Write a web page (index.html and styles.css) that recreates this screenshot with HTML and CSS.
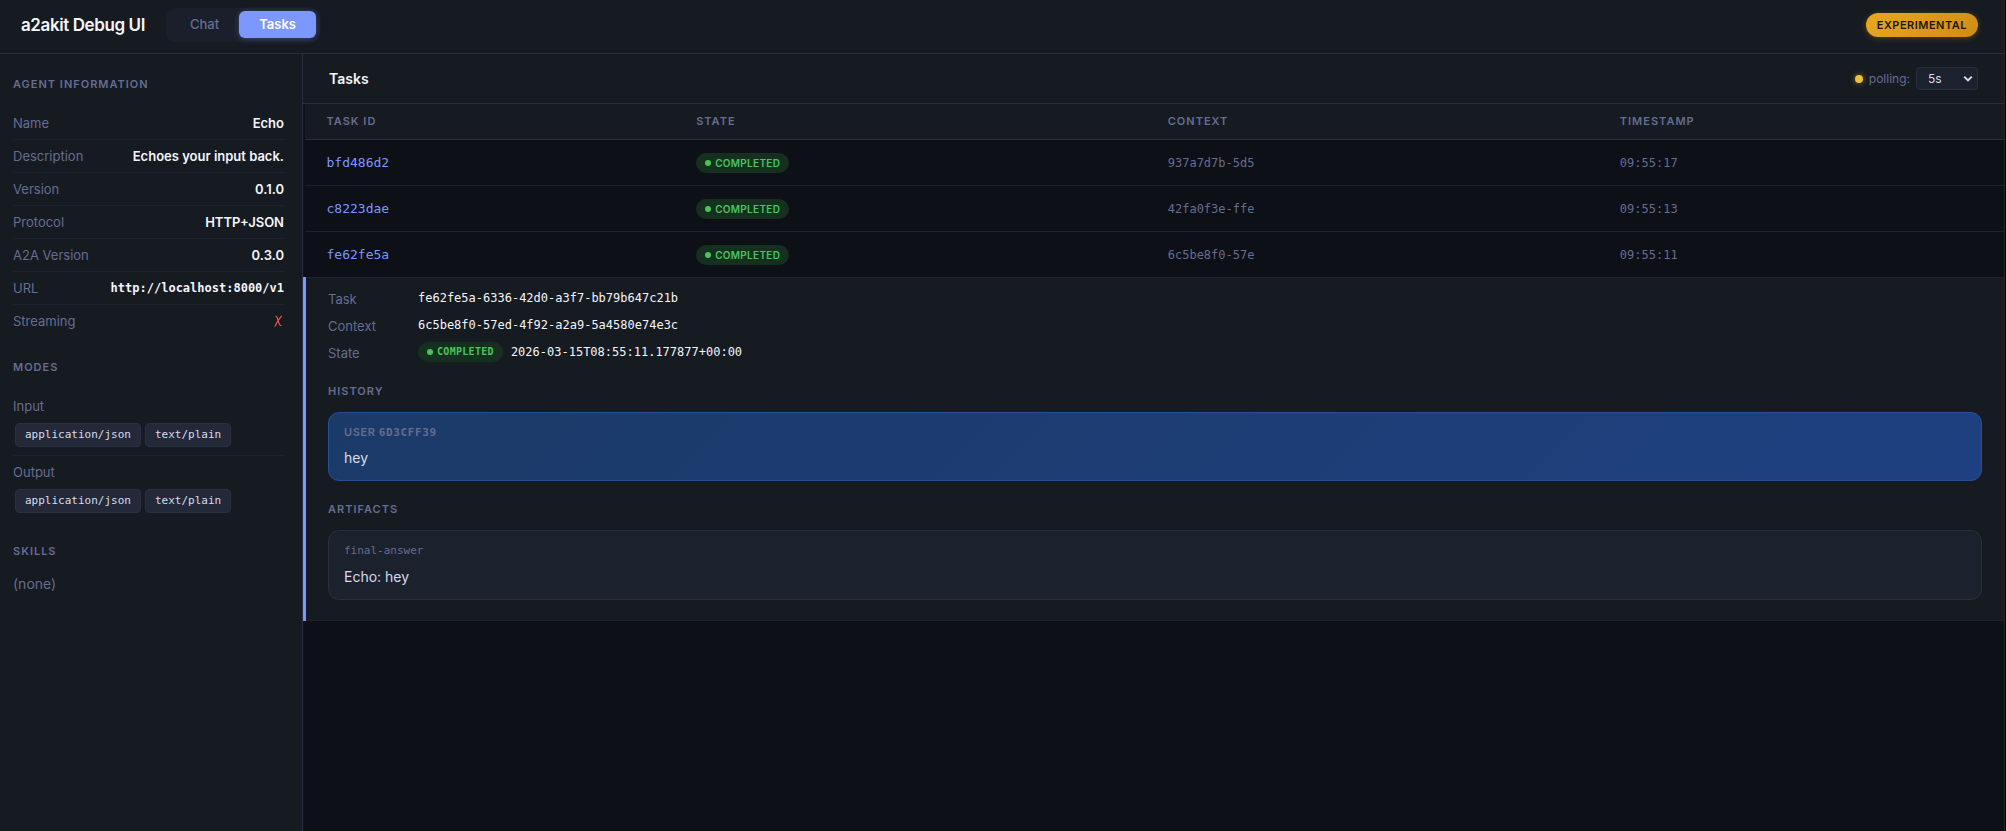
FILE: index.html
```html
<!DOCTYPE html>
<html lang="en">
<head>
<meta charset="utf-8">
<title>a2akit Debug UI</title>
<link rel="stylesheet" href="styles.css">
</head>
<body>
<div class="app">
  <header class="topbar">
    <h1 class="brand">a2akit Debug UI</h1>
    <nav class="tabs">
      <button class="tab" type="button">Chat</button>
      <button class="tab tab-active" type="button">Tasks</button>
    </nav>
    <span class="experimental">EXPERIMENTAL</span>
  </header>
  <div class="body">
    <aside class="sidebar">
      <section class="panel">
        <h2 class="label">AGENT INFORMATION</h2>
        <dl class="info">
          <div class="info-row"><dt>Name</dt><dd>Echo</dd></div>
          <div class="info-row"><dt>Description</dt><dd>Echoes your input back.</dd></div>
          <div class="info-row"><dt>Version</dt><dd>0.1.0</dd></div>
          <div class="info-row"><dt>Protocol</dt><dd>HTTP+JSON</dd></div>
          <div class="info-row"><dt>A2A Version</dt><dd>0.3.0</dd></div>
          <div class="info-row"><dt>URL</dt><dd class="mono">http://localhost:8000/v1</dd></div>
          <div class="info-row"><dt>Streaming</dt><dd class="no"><svg class="cross" viewBox="0 0 9 12" role="img" aria-label="No"><path d="M7.6.8C5 4 2.600 7.500.8 11.400M1.600 1.300C3.200 1.100 3.500 3 4.200 5.800 4.900 8.600 5.500 11 7.500 10.700"/></svg></dd></div>
        </dl>
      </section>
      <section class="panel">
        <h2 class="label">MODES</h2>
        <div class="mode">
          <span class="mode-name">Input</span>
          <div class="chips"><span class="chip">application/json</span><span class="chip">text/plain</span></div>
        </div>
        <div class="mode">
          <span class="mode-name">Output</span>
          <div class="chips"><span class="chip">application/json</span><span class="chip">text/plain</span></div>
        </div>
      </section>
      <section class="panel">
        <h2 class="label">SKILLS</h2>
        <p class="none">(none)</p>
      </section>
    </aside>
    <main class="main">
      <div class="main-head">
        <h2 class="main-title">Tasks</h2>
        <div class="polling">
          <span class="poll-dot"></span>
          <label for="poll">polling:</label>
          <span class="select-wrap">
            <select id="poll" class="poll-select"><option>5s</option></select>
            <svg class="chevron" viewBox="0 0 10 8" aria-hidden="true"><path d="M1.2 1.6 5 5.4 8.8 1.6"/></svg>
          </span>
        </div>
      </div>
      <table class="tasks">
        <colgroup><col class="c-id"><col class="c-state"><col class="c-context"><col class="c-time"></colgroup>
        <thead>
          <tr><th>TASK ID</th><th>STATE</th><th>CONTEXT</th><th>TIMESTAMP</th></tr>
        </thead>
        <tbody>
          <tr><td class="task-id">bfd486d2</td><td><span class="badge">COMPLETED</span></td><td class="meta">937a7d7b-5d5</td><td class="meta">09:55:17</td></tr>
          <tr><td class="task-id">c8223dae</td><td><span class="badge">COMPLETED</span></td><td class="meta">42fa0f3e-ffe</td><td class="meta">09:55:13</td></tr>
          <tr><td class="task-id">fe62fe5a</td><td><span class="badge">COMPLETED</span></td><td class="meta">6c5be8f0-57e</td><td class="meta">09:55:11</td></tr>
          <tr>
            <td class="detail" colspan="4">
              <dl class="facts">
                <dt>Task</dt><dd>fe62fe5a-6336-42d0-a3f7-bb79b647c21b</dd>
                <dt>Context</dt><dd>6c5be8f0-57ed-4f92-a2a9-5a4580e74e3c</dd>
                <dt>State</dt><dd><span class="badge badge-mono">COMPLETED</span><span>2026-03-15T08:55:11.177877+00:00</span></dd>
              </dl>
              <h3 class="label">HISTORY</h3>
              <article class="card card-user">
                <div class="card-head">USER <span class="card-id">6D3CFF39</span></div>
                <div class="card-text">hey</div>
              </article>
              <h3 class="label">ARTIFACTS</h3>
              <article class="card">
                <div class="card-name">final-answer</div>
                <div class="card-text">Echo: hey</div>
              </article>
            </td>
          </tr>
        </tbody>
      </table>
    </main>
  </div>
</div>
</body>
</html>
```
FILE: styles.css
```css
:root {
  --bg: #0d1017;
  --surface: #161a21;
  --raised: #1c212e;
  --chip: #232939;
  --line: #2a2e3e;
  --line-soft: #1e222d;
  --muted: #656d92;
  --text: #d8dcec;
  --strong: #f4f5fa;
  --accent: #7c97ff;
  --green: #4ac55c;
  --mono: "DejaVu Sans Mono", "Liberation Mono", monospace;
}

* { box-sizing: border-box; }

body {
  margin: 0;
  background: #000;
  color: var(--text);
  font: 14px/20px Inter, "Liberation Sans", sans-serif;
}

h1, h2, h3, dl, dd, p { margin: 0; }

.app {
  display: flex;
  flex-direction: column;
  min-height: 100vh;
  margin-right: 1px;
  border-right: 1px solid #23262e;
  background: var(--bg);
}

.topbar {
  display: flex;
  align-items: center;
  height: 54px;
  padding: 0 26px 4px 21px;
  background: var(--surface);
  border-bottom: 1px solid var(--line);
}

.brand {
  color: var(--strong);
  font-size: 17px;
  font-weight: 600;
  letter-spacing: -0.4px;
}

.tabs {
  display: flex;
  margin-left: 21px;
  padding: 3px 4px 4px;
  border-radius: 9px;
  background: #1a1f2b;
}

.tab {
  height: 27px;
  padding: 0 20px;
  border: 0;
  border-radius: 6px;
  background: none;
  color: var(--muted);
  font: 500 13px/20px Inter, sans-serif;
}

.tab-active {
  background: var(--accent);
  box-shadow: 0 1px 6px rgba(124, 151, 255, 0.35);
  color: #fff;
  font-weight: 600;
}

.experimental {
  margin-left: auto;
  padding: 2px 11px;
  border-radius: 12px;
  background: linear-gradient(135deg, #e9a820, #cf8c17);
  box-shadow: 0 1px 6px rgba(230, 160, 30, 0.3);
  color: #1c1608;
  font-size: 11px;
  font-weight: 600;
  letter-spacing: 0.5px;
}

.body { display: flex; flex: 1; }

.sidebar {
  flex: none;
  width: 303px;
  padding: 20px 18px 20px 13px;
  background: var(--surface);
  border-right: 1px solid var(--line);
}

.panel { margin-bottom: 20px; }

.label {
  color: var(--muted);
  font-size: 11px;
  font-weight: 600;
  letter-spacing: 1px;
  line-height: 20px;
}

.panel .label { margin-bottom: 13px; }

.info-row {
  display: flex;
  justify-content: space-between;
  padding: 6px 0;
  border-bottom: 1px solid var(--line-soft);
}

.info-row:last-child, .mode:last-child { border-bottom: 0; }

.info dt { color: var(--muted); font-size: 13px; }
.info dd { color: var(--strong); font-size: 13px; font-weight: 600; }
.info .mono { font: 700 12px/20px var(--mono); }

.cross {
  display: block;
  width: 9px;
  height: 12px;
  margin: 4px 1px 0;
  fill: none;
  stroke: #e5534b;
  stroke-width: 1.3;
}

.mode {
  padding: 6px 0 8px;
  border-bottom: 1px solid var(--line-soft);
}

.mode-name { display: block; color: var(--muted); font-size: 13px; }

.chips { display: flex; gap: 4px; margin: 7px 2px 0; }

.chip {
  padding: 1px 9px;
  border: 1px solid #2a3042;
  border-radius: 4px;
  background: var(--chip);
  font: 11px/20px var(--mono);
}

.none { color: var(--muted); }

.main { flex: 1; min-width: 0; }

.main-head {
  display: flex;
  align-items: center;
  justify-content: space-between;
  height: 50px;
  padding: 0 26px;
  background: var(--surface);
  border-bottom: 1px solid var(--line);
}

.main-title { color: var(--strong); font-size: 14px; font-weight: 600; }

.polling {
  display: flex;
  align-items: center;
  gap: 6px;
  color: var(--muted);
  font-size: 12px;
}

.poll-dot {
  width: 8px;
  height: 8px;
  border-radius: 50%;
  background: #efbf3e;
  box-shadow: 0 0 6px rgba(239, 191, 62, 0.5);
}

.select-wrap { position: relative; display: flex; }

.poll-select {
  appearance: none;
  width: 62px;
  height: 23px;
  padding: 0 11px;
  border: 1px solid var(--line);
  border-radius: 4px;
  background: var(--raised);
  color: var(--text);
  font: 12px Inter, sans-serif;
}

.chevron {
  position: absolute;
  top: 8px;
  right: 5px;
  width: 10px;
  height: 8px;
  fill: none;
  stroke: var(--text);
  stroke-width: 2;
  pointer-events: none;
}

.tasks {
  width: 100%;
  table-layout: fixed;
  border-collapse: collapse;
}

.c-id { width: 21.75%; }
.c-state { width: 27.75%; }
.c-context { width: 26.6%; }
.c-time { width: 23.9%; }

.tasks th {
  height: 35px;
  padding: 0 22px;
  background: var(--surface);
  border-bottom: 1px solid var(--line);
  color: var(--muted);
  font-size: 11px;
  font-weight: 600;
  letter-spacing: 1px;
  text-align: left;
}

.tasks td {
  height: 46px;
  padding: 1px 22px 0;
  border-bottom: 1px solid var(--line-soft);
}

.tasks .task-id { color: var(--accent); font: 13px/20px var(--mono); }
.tasks .meta { color: var(--muted); font: 12px/20px var(--mono); }

.badge {
  display: inline-flex;
  align-items: center;
  gap: 4px;
  padding: 0 9px;
  border-radius: 10px;
  background: #15301f;
  color: var(--green);
  font-size: 10px;
  font-weight: 600;
  letter-spacing: 0.3px;
  line-height: 20px;
  vertical-align: middle;
}

.badge::before {
  content: "";
  width: 6px;
  height: 6px;
  border-radius: 50%;
  background: currentColor;
}

.badge-mono { font-weight: 700; }

.tasks .detail {
  padding: 10px 22px 20px;
  background: var(--surface);
  border-left: 3px solid var(--accent);
}

.facts {
  display: grid;
  grid-template-columns: 90px 1fr;
  row-gap: 5px;
  margin-bottom: 17px;
}

.facts dt { padding-top: 1px; color: var(--muted); font-size: 13px; line-height: 21px; }

.facts dd {
  display: flex;
  align-items: flex-start;
  gap: 8px;
  color: var(--strong);
  font: 12px/20px var(--mono);
}

.detail .label { margin-bottom: 11px; }

.card {
  padding: 10px 15px;
  border: 1px solid var(--line);
  border-radius: 11px;
  background: var(--raised);
}

.card + .label { margin-top: 18px; }

.card-user {
  border-color: #284e94;
  background: linear-gradient(135deg, #1b3a68, #1e4080);
}

.card-head {
  color: var(--muted);
  font-size: 11px;
  font-weight: 600;
  letter-spacing: 0.6px;
  line-height: 18px;
}

.card-id { font-family: var(--mono); font-weight: 700; }
.card-name { color: var(--muted); font: 11px/20px var(--mono); }
.card-text { margin-top: 4px; line-height: 24px; }
```
